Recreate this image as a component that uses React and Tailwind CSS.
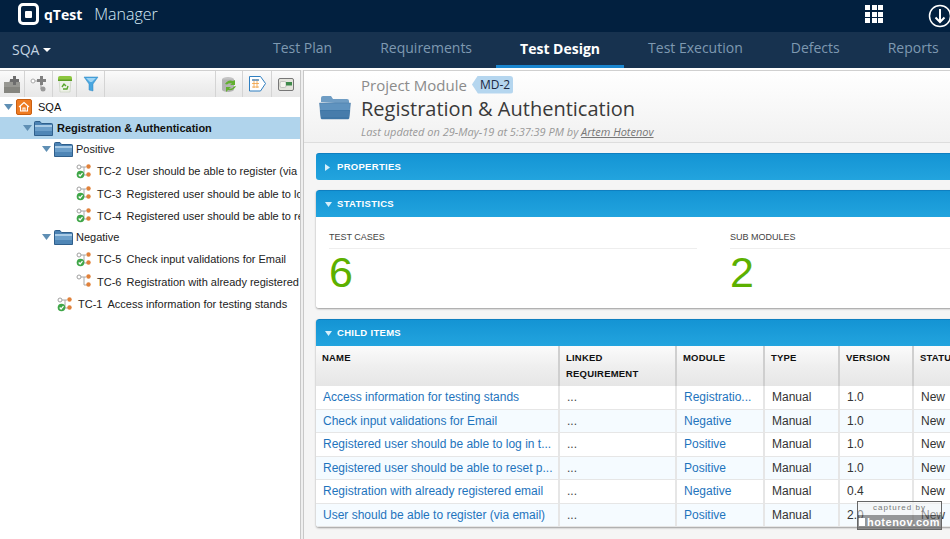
import { Fragment } from 'react';

const sans = "font-['Liberation_Sans',Arial,sans-serif]";
const open = "font-['Open_Sans',sans-serif]";

const tabs = ['Test Plan', 'Requirements', 'Test Design', 'Test Execution', 'Defects', 'Reports'];

const rows = [
  ['Access information for testing stands', 'Registratio...', 'Manual', '1.0'],
  ['Check input validations for Email', 'Negative', 'Manual', '1.0'],
  ['Registered user should be able to log in t...', 'Positive', 'Manual', '1.0'],
  ['Registered user should be able to reset p...', 'Positive', 'Manual', '1.0'],
  ['Registration with already registered email', 'Negative', 'Manual', '0.4'],
  ['User should be able to register (via email)', 'Positive', 'Manual', '2.0'],
];

function Arrow({ className = '' }) {
  return (
    <svg width="9" height="6" viewBox="0 0 9 6" className={className}>
      <path d="M0 0h9L4.500 6z" fill="#5f8fb4" />
    </svg>
  );
}

function Folder({ w = 19, h = 15 }) {
  return (
    <svg width={w} height={h} viewBox="0 0 19 15" className="shrink-0">
      <path d="M0.500 14.500V1.500q0-1 1-1h4.500l1.500 2h10q1 0 1 1v11z" fill="#4b82b3" stroke="#2f5f8c" strokeWidth="1" />
      <rect x="1" y="4" width="17" height="10" fill="#6c9fca" />
      <rect x="1" y="4" width="17" height="2" fill="#a9cbe6" />
      <rect x="1" y="10" width="17" height="4" fill="#4f86b6" />
    </svg>
  );
}

function OpenFolder() {
  return (
    <svg width="32" height="26" viewBox="0 0 32 26" className="shrink-0">
      <path d="M2 8V4q0-2 2-2h8l2 3h14q2 0 2 2v3z" fill="#6f9dc4" />
      <path d="M0.500 9h31l-1.500 15q0 1-1 1H3q-1 0-1-1z" fill="#5f93bf" stroke="#4a7ba6" strokeWidth="0.500" />
      <path d="M1 16h30l-1 8q0 1-1 1H3q-1 0-1-1z" fill="#3f76a6" />
      <path d="M2 18h28M2 20h28M2 22h28" stroke="#5a8fbb" strokeWidth="0.600" />
    </svg>
  );
}

// the little test-case tree glyph next to each TC row
function TestCaseIcon({ check = true }) {
  return (
    <svg width="16" height="15" viewBox="0 0 16 15" className="shrink-0">
      <path d="M5 3h5M8 3v8h3" stroke="#a8a8a8" strokeWidth="1" fill="none" />
      <circle cx="3" cy="3" r="2" fill="#fff" stroke="#a0a0a0" />
      <circle cx="12.500" cy="2.500" r="2.200" fill="#e0813a" />
      <circle cx="12.500" cy="10.500" r="2.200" fill="#e0813a" />
      {check && <circle cx="4.500" cy="10.500" r="3.800" fill="#3fa648" />}
      {check && <path d="M2.700 10.500l1.400 1.500 2.400-2.800" stroke="#fff" strokeWidth="1.200" fill="none" />}
    </svg>
  );
}

function ToolButton({ children, className = '' }) {
  return <div className={`flex h-full items-center justify-center ${className}`}>{children}</div>;
}

function Toolbar() {
  return (
    <div className="flex h-[26px] items-stretch bg-gradient-to-b from-[#fbfbfb] via-[#f0f0f0] to-[#e8e8e8]">
      <ToolButton className="w-[25px] border-r border-[#d4d4d4]">
        <svg width="16" height="17" viewBox="0 0 16 17">
          <path d="M0 6h16v11H0z" fill="#979792" />
          <path d="M0 6h5l1-2h3v2" fill="#aaa" />
          <path d="M0 11h16v6H0z" fill="#85857f" />
          <path d="M9 0h3v3h3v3h-3v3H9V6H6V3h3z" fill="#6d6d6d" />
        </svg>
      </ToolButton>
      <ToolButton className="w-[28px] border-r border-[#d4d4d4]">
        <svg width="18" height="18" viewBox="0 0 18 18">
          <circle cx="3" cy="6" r="2" fill="#fff" stroke="#aaa" />
          <path d="M5 6h3" stroke="#aaa" />
          <path d="M10 1h3v3h3v3h-3v3h-3V7H7V4h3z" fill="#808080" />
          <path d="M11 10v4h1" stroke="#999" fill="none" />
          <circle cx="13" cy="14" r="2.500" fill="#999" />
        </svg>
      </ToolButton>
      <ToolButton className="w-[24px] border-r border-[#d4d4d4]">
        <svg width="16" height="18" viewBox="0 0 16 18">
          <path d="M2 4h12l-1 13H3z" fill="#eef2e8" stroke="#b9c4ae" strokeWidth="0.500" />
          <path d="M1 3q0-2 2-2h10q2 0 2 2v3H1z" fill="#8cc63f" />
          <path d="M1 4.500h14V6H1z" fill="#5f9e28" />
          <path d="M5 12l2-3 2 2M11 11l-1 3H6" stroke="#5aa62e" strokeWidth="1.400" fill="none" />
        </svg>
      </ToolButton>
      <ToolButton className="w-[28px] border-r border-[#d4d4d4]">
        <svg width="16" height="16" viewBox="0 0 16 16">
          <path d="M1 1h14L10 8v7l-4-1V8z" fill="#4aa7e0" stroke="#2f86c0" strokeWidth="0.500" />
          <path d="M3 2h10L9 6H7z" fill="#9ed4f4" />
        </svg>
      </ToolButton>
      <div className="flex-1 border-r border-[#d4d4d4]" />
      <ToolButton className="w-[27px] border-r border-[#d4d4d4]">
        <svg width="17" height="17" viewBox="0 0 17 17">
          <ellipse cx="7" cy="3.500" rx="6" ry="2.500" fill="#c4c4c4" />
          <path d="M1 3.500v10c0 1.500 3 2.500 6 2.500s6-1 6-2.500v-10z" fill="#b4b4b4" />
          <path d="M4 8q3-5 8-3l2-1v5h-5l2-1.500q-3-1-5 1z" fill="#62b02f" />
          <path d="M15 10q-2 5-8 4l-2 2v-5h5l-2 1.500q3 1 5-2z" fill="#62b02f" />
        </svg>
      </ToolButton>
      <ToolButton className="w-[29px] border-r border-[#d4d4d4]">
        <svg width="17" height="16" viewBox="0 0 17 16">
          <path d="M0.500 0.500h11l5 7-5 7.500h-11z" fill="#fff" stroke="#2f7fc1" />
          <path d="M3 4h7M3 7.500h7M3 11h7M5 3v9M8 3v9" stroke="#f0a040" strokeWidth="0.800" />
          <path d="M3 4h7" stroke="#4a90d0" strokeWidth="1.400" />
        </svg>
      </ToolButton>
      <ToolButton className="w-[28px]">
        <svg width="16" height="13" viewBox="0 0 16 13">
          <rect x="0.500" y="0.500" width="15" height="12" rx="1.500" fill="#e4e4dc" stroke="#777" />
          <rect x="2" y="3.500" width="6" height="6" rx="1.500" fill="#f5f5ee" stroke="#999" strokeWidth="0.500" />
          <rect x="8" y="4" width="6" height="3.500" fill="#3f8a4a" />
        </svg>
      </ToolButton>
    </div>
  );
}

function CaseRow({ id, title, indent, check }) {
  return (
    <div className={`flex h-[22.2px] items-center whitespace-nowrap ${indent}`}>
      <TestCaseIcon check={check} />
      <span className="ml-[5px] text-[11px] text-[#222]">{id}</span>
      <span className="ml-[5px] text-[11px] text-[#222]">{title}</span>
    </div>
  );
}

function FolderRow({ label }) {
  return (
    <div className="flex h-[21.5px] items-center pb-[1px] pl-[42px]">
      <Arrow />
      <span className="ml-[3px]"><Folder /></span>
      <span className="ml-[3px] text-[11px] text-[#222]">{label}</span>
    </div>
  );
}

function Tree() {
  return (
    <div className={`flex-1 overflow-hidden bg-white ${sans}`}>
      <div className="flex h-[20px] items-center pl-[4px]">
        <Arrow />
        <svg width="16" height="16" viewBox="0 0 16 16" className="ml-[3px]">
          <rect x="0.500" y="0.500" width="15" height="15" rx="1.500" fill="#ee7b22" stroke="#c95f10" />
          <path d="M3 8l5-4.500L13 8M4.500 7.500V12h7V7.500M7 12V9h2v3" stroke="#fff" strokeWidth="1.100" fill="none" />
        </svg>
        <span className="ml-[6px] text-[11px] text-[#111]">SQA</span>
      </div>
      <div className="flex h-[22px] items-center bg-[#b0d4ec] pl-[23px]">
        <Arrow />
        <span className="ml-[2px]"><Folder /></span>
        <span className="ml-[4px] text-[11px] font-bold text-[#111]">Registration &amp; Authentication</span>
      </div>
      <FolderRow label="Positive" />
      <CaseRow indent="pl-[76px]" id="TC-2" title="User should be able to register (via email)" />
      <CaseRow indent="pl-[76px]" id="TC-3" title="Registered user should be able to log in to the system" />
      <CaseRow indent="pl-[76px]" id="TC-4" title="Registered user should be able to reset password" />
      <FolderRow label="Negative" />
      <CaseRow indent="pl-[76px]" id="TC-5" title="Check input validations for Email" />
      <CaseRow indent="pl-[76px]" id="TC-6" title="Registration with already registered email" check={false} />
      <CaseRow indent="pl-[57px]" id="TC-1" title="Access information for testing stands" />
    </div>
  );
}

function PanelHeader({ title, open: isOpen }) {
  return (
    <div className={`flex h-[27px] items-center rounded-t-[3px] border-t border-[#0f7fc0] bg-gradient-to-b from-[#1494d4] to-[#22a4de] pl-[9px] ${isOpen ? '' : 'rounded-b-[3px]'}`}>
      {isOpen ? (
        <svg width="7" height="5" viewBox="0 0 7 5"><path d="M0 0h7L3.500 5z" fill="#d5effb" /></svg>
      ) : (
        <svg width="5" height="7" viewBox="0 0 5 7" className="mr-[2px]"><path d="M0 0l5 3.500L0 7z" fill="#d5effb" /></svg>
      )}
      <span className={`ml-[5px] text-[9.500px] font-bold tracking-[0.300px] text-white ${sans}`}>{title}</span>
    </div>
  );
}

function Stat({ label, value, className }) {
  return (
    <div className={className}>
      <div className="border-b border-[#eeeeee] pb-[5px] text-[9px] leading-[11px] text-[#444]">{label}</div>
      <div className="text-[43px] leading-[46px] text-[#5cb000]">{value}</div>
    </div>
  );
}

function HeadCell({ children, className = '' }) {
  return (
    <div className={`h-[40px] border-r-2 border-[#cfcfcf] bg-gradient-to-b from-[#fbfbfb] via-[#efefef] to-[#e6e6e6] px-[6px] pt-[4px] text-[9.500px] font-bold leading-[16px] tracking-[0.200px] text-[#111] ${className}`}>
      {children}
    </div>
  );
}

function ChildTable() {
  const cell = 'flex items-center border-r-2 border-[#e4e4e4] px-[7px] text-[12px] whitespace-nowrap overflow-hidden';
  return (
    <div className={`grid grid-cols-[244px_117px_88px_75px_74px_60px] ${sans}`}>
      <HeadCell>NAME</HeadCell>
      <HeadCell>LINKED<br />REQUIREMENT</HeadCell>
      <HeadCell>MODULE</HeadCell>
      <HeadCell>TYPE</HeadCell>
      <HeadCell>VERSION</HeadCell>
      <HeadCell className="border-r-0">STATUS</HeadCell>
      {rows.map((r, i) => {
        const bg = i % 2 ? 'bg-[#f5fbff]' : 'bg-white';
        const row = `h-[23.500px] border-b border-[#e6e6e6] ${bg}`;
        return (
          <Fragment key={r[0]}>
            <div className={`${cell} ${row} text-[#1e74bd]`}>{r[0]}</div>
            <div className={`${cell} ${row} text-[#444]`}>...</div>
            <div className={`${cell} ${row} text-[#1e74bd]`}>{r[1]}</div>
            <div className={`${cell} ${row} text-[#333]`}>{r[2]}</div>
            <div className={`${cell} ${row} text-[#333]`}>{r[3]}</div>
            <div className={`${cell} ${row} border-r-0 text-[#333]`}>New</div>
          </Fragment>
        );
      })}
    </div>
  );
}

export default function App() {
  return (
    <div className="relative flex h-[539px] w-[950px] flex-col overflow-hidden bg-white">
      <header className="flex h-[32px] shrink-0 items-center bg-[#02203f] pb-[4px] pl-[18px] text-white">
        <div className="flex h-[22px] w-[21px] items-center justify-center rounded-[5px] border-[3px] border-white">
          <div className="h-[7px] w-[7px] rounded-[1px] bg-white" />
        </div>
        <span className={`ml-[5px] text-[14px] font-bold ${open}`}>qTest</span>
        <span className={`ml-[12px] text-[16px] font-light text-[#d8ecf8] ${open}`}>Manager</span>
        <div className="ml-auto grid grid-cols-3 gap-[1.500px]">
          {[0, 1, 2, 3, 4, 5, 6, 7, 8].map((n) => (
            <div key={n} className="h-[5px] w-[5px] bg-white" />
          ))}
        </div>
        <svg width="24" height="24" viewBox="0 0 24 24" className="ml-[45px] -mr-[2px] mt-[3px] shrink-0">
          <circle cx="12" cy="12" r="10.500" fill="none" stroke="#fff" strokeWidth="1.500" />
          <path d="M12 5v13M7.500 13.500L12 18l4.500-4.500" fill="none" stroke="#fff" strokeWidth="2" />
        </svg>
      </header>

      <nav className={`flex h-[36px] shrink-0 items-stretch overflow-hidden bg-[#17324f] ${open}`}>
        <div className="flex w-[249px] shrink-0 items-center pb-[2px] pl-[12px] text-[14px] text-[#c4d4e2]">
          SQA
          <svg width="8" height="4" viewBox="0 0 8 4" className="ml-[4px] mt-[2px]"><path d="M0 0h8L4 4z" fill="#fff" /></svg>
        </div>
        {tabs.map((t) => (
          <div
            key={t}
            className={`flex shrink-0 items-center whitespace-nowrap px-6 text-[14px] ${t === 'Test Design' ? 'border-b-[3px] border-[#1a86cf] pb-[1px] font-bold text-white' : 'pb-[6px] text-[#7e99b1]'}`}>
            {t}
          </div>
        ))}
      </nav>

      <div className="flex min-h-0 flex-1 border-t-2 border-white">
        <aside className="flex w-[300px] shrink-0 flex-col border-t border-[#d0d0d0]">
          <Toolbar />
          <Tree />
        </aside>
        <div className="w-[4px] shrink-0 border-x border-[#c8c8c8] bg-[#efefef]" />

        <main className="min-w-0 flex-1 overflow-hidden border-t border-[#d0d0d0] bg-[#f5f5f5]">
          <div className="flex h-[72px] items-center border-b border-[#dddddd] bg-gradient-to-b from-white to-[#f1f1f1] pl-[15px]">
            <OpenFolder />
            <div className={`ml-[10px] ${open}`}>
              <div className="flex items-center">
                <span className="text-[15px] leading-[20px] text-[#8b8b8b]">Project Module</span>
                <span className="relative ml-[5px] rounded-r-[3px] bg-[#b5d6ef] py-[1px] pl-[8px] pr-[3px] text-[12px] leading-[16px] text-[#1b2a44] [clip-path:polygon(6px_0,100%_0,100%_100%,6px_100%,0_50%)]">MD-2</span>
              </div>
              <div className="text-[20px] leading-[27px] text-[#3a3a3a]">Registration &amp; Authentication</div>
              <div className="mt-[3px] whitespace-nowrap text-[11px] italic leading-[14px] text-[#999]">
                Last updated on 29-May-19 at 5:37:39 PM by <span className="text-[#777] underline">Artem Hotenov</span>
              </div>
            </div>
          </div>

          <div className="-mr-[20px] ml-[12px] flex flex-col gap-[10px] pt-[10px]">
            <PanelHeader title="PROPERTIES" />
            <section className="overflow-hidden rounded-[3px] shadow-[0_1px_2px_#999]">
              <PanelHeader title="STATISTICS" open />
              <div className={`flex h-[91px] bg-white pl-[13px] pt-[15px] ${sans}`}>
                <Stat label="TEST CASES" value="6" className="w-[368px]" />
                <Stat label="SUB MODULES" value="2" className="ml-[33px] flex-1" />
              </div>
            </section>
            <section className="mt-[1px] overflow-hidden rounded-[3px] shadow-[0_1px_2px_#999]">
              <PanelHeader title="CHILD ITEMS" open />
              <ChildTable />
            </section>
          </div>
        </main>
      </div>

      <div className={`absolute left-[857px] top-[501px] h-[29px] w-[85px] border border-[#666] text-center ${sans}`}>
        <div className="h-[13px] bg-[#f4f4f480] text-[8px] leading-[12px] tracking-[1px] text-[#777]">captured by</div>
        <div className="flex h-[14px] items-center justify-center bg-[#55555599] text-[11px] font-bold tracking-[0.500px] text-white">
          <span className="mr-[2px] h-[8px] w-[6px] bg-white" />
          hotenov.com
        </div>
      </div>
    </div>
  );
}
